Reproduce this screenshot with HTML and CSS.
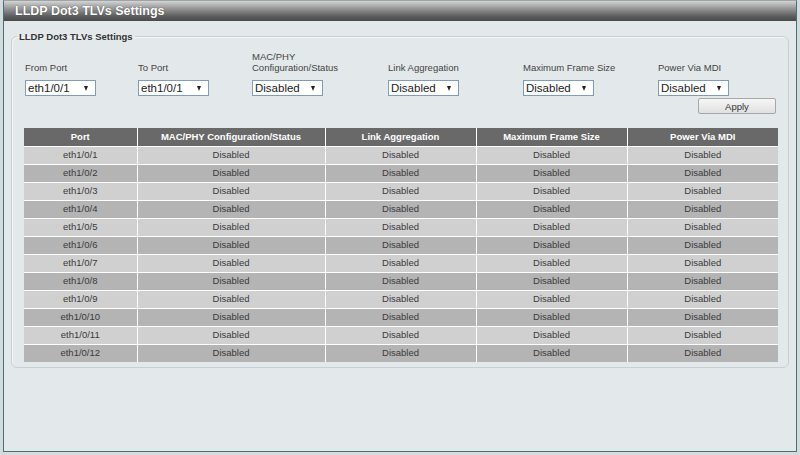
FILE: index.html
```html
<!DOCTYPE html>
<html>
<head>
<meta charset="utf-8">
<link rel="stylesheet" href="styles.css">
</head>
<body>
<div class="frame">
  <div class="titlebar">LLDP Dot3 TLVs Settings</div>
  <fieldset class="group">
    <legend>LLDP Dot3 TLVs Settings</legend>
    <div class="form">
      <div class="lbl">From Port</div>
      <div class="lbl">To Port</div>
      <div class="lbl">MAC/PHY<br>Configuration/Status</div>
      <div class="lbl">Link Aggregation</div>
      <div class="lbl">Maximum Frame Size</div>
      <div class="lbl">Power Via MDI</div>
      <div class="sel"><span>eth1/0/1</span><i class="arr"></i></div>
      <div class="sel"><span>eth1/0/1</span><i class="arr"></i></div>
      <div class="sel"><span>Disabled</span><i class="arr"></i></div>
      <div class="sel"><span>Disabled</span><i class="arr"></i></div>
      <div class="sel"><span>Disabled</span><i class="arr"></i></div>
      <div class="sel"><span>Disabled</span><i class="arr"></i></div>
    </div>
    <div class="actions"><button class="btn">Apply</button></div>
    <table class="grid">
      <colgroup>
        <col class="c1"><col class="c2"><col class="c3"><col class="c4"><col class="c5">
      </colgroup>
      <thead>
        <tr><th>Port</th><th>MAC/PHY Configuration/Status</th><th>Link Aggregation</th><th>Maximum Frame Size</th><th>Power Via MDI</th></tr>
      </thead>
      <tbody>
        <tr><td>eth1/0/1</td><td>Disabled</td><td>Disabled</td><td>Disabled</td><td>Disabled</td></tr>
        <tr><td>eth1/0/2</td><td>Disabled</td><td>Disabled</td><td>Disabled</td><td>Disabled</td></tr>
        <tr><td>eth1/0/3</td><td>Disabled</td><td>Disabled</td><td>Disabled</td><td>Disabled</td></tr>
        <tr><td>eth1/0/4</td><td>Disabled</td><td>Disabled</td><td>Disabled</td><td>Disabled</td></tr>
        <tr><td>eth1/0/5</td><td>Disabled</td><td>Disabled</td><td>Disabled</td><td>Disabled</td></tr>
        <tr><td>eth1/0/6</td><td>Disabled</td><td>Disabled</td><td>Disabled</td><td>Disabled</td></tr>
        <tr><td>eth1/0/7</td><td>Disabled</td><td>Disabled</td><td>Disabled</td><td>Disabled</td></tr>
        <tr><td>eth1/0/8</td><td>Disabled</td><td>Disabled</td><td>Disabled</td><td>Disabled</td></tr>
        <tr><td>eth1/0/9</td><td>Disabled</td><td>Disabled</td><td>Disabled</td><td>Disabled</td></tr>
        <tr><td>eth1/0/10</td><td>Disabled</td><td>Disabled</td><td>Disabled</td><td>Disabled</td></tr>
        <tr><td>eth1/0/11</td><td>Disabled</td><td>Disabled</td><td>Disabled</td><td>Disabled</td></tr>
        <tr><td>eth1/0/12</td><td>Disabled</td><td>Disabled</td><td>Disabled</td><td>Disabled</td></tr>
      </tbody>
    </table>
  </fieldset>
</div>
</body>
</html>
```
FILE: styles.css
```css
* { box-sizing: border-box; }
html, body { margin: 0; padding: 0; }
body {
  background: #d6dadc;
  font-family: "Liberation Sans", Arial, sans-serif;
  font-size: 9.5px;
  color: #333;
  width: 800px;
  height: 455px;
  overflow: hidden;
}
.frame {
  margin-left: 3px;
  width: 794px;
  height: 452px;
  background: #e3e8ea;
  border: 1px solid #3f7478;
  border-top: 1px solid #9aa5a8;
}
.titlebar {
  height: 20px;
  background: linear-gradient(#d4d4d4 0%, #9a9a9a 35%, #5e5e5e 75%, #4a4a4a 100%);
  color: #fff;
  font-weight: bold;
  font-size: 12.5px;
  line-height: 20px;
  padding-left: 11px;
  text-shadow: 0 0 1px #333;
}
.group {
  margin: 10px 7px 0 7px;
  padding: 0 10px 5px 12px;
  border: 1px solid #c7cfd2;
  border-radius: 6px;
  box-shadow: 1px 1px 0 #f4f6f7 inset;
}
.group legend {
  font-weight: bold;
  font-size: 9.5px;
  padding: 0 2px;
  margin-left: -7px;
  color: #333;
}
.form {
  display: grid;
  grid-template-columns: 113px 114px 136px 135px 135px 1fr;
  align-items: end;
  padding-left: 1px;
  margin-top: 9px;
  row-gap: 7px;
}
.lbl {
  font-size: 9.5px;
  line-height: 11px;
  color: #444;
}
.sel {
  width: 71px;
  height: 16px;
  border: 1px solid #7f9db9;
  background: #fff;
  display: flex;
  align-items: center;
  justify-content: space-between;
  padding: 0 7px 0 2px;
  font-size: 11.5px;
  color: #222;
}
.arr {
  width: 0;
  height: 0;
  border-left: 2.5px solid transparent;
  border-right: 2.5px solid transparent;
  border-top: 5px solid #222;
}
.actions {
  display: flex;
  justify-content: flex-end;
  padding-right: 2px;
  margin-top: 2px;
}
.btn {
  width: 78px;
  height: 16px;
  border: 1px solid #a7a7a7;
  background: linear-gradient(#f6f6f6, #e0e0e0);
  font-family: "Liberation Sans", Arial, sans-serif;
  font-size: 9.5px;
  color: #333;
  padding: 0;
  border-radius: 2px;
}
.grid {
  margin-top: 14px;
  width: 754px;
  border-collapse: collapse;
  table-layout: fixed;
}
.c1 { width: 113px; }
.c2 { width: 188px; }
.c3 { width: 151px; }
.c4 { width: 151px; }
.c5 { width: 151px; }
.grid th, .grid td {
  height: 18px;
  padding: 0;
  text-align: center;
  border: 1px solid #fff;
  border-top: 0;
  line-height: 16px;
}
.grid th {
  background: #696969;
  color: #fff;
  font-weight: bold;
  font-size: 9.5px;
}
.grid td {
  font-size: 9.5px;
  color: #3a3a3a;
}
.grid th:first-child, .grid td:first-child { border-left: 0; }
.grid th:last-child, .grid td:last-child { border-right: 0; }
.grid tbody tr:nth-child(odd) td { background: #d0d0d0; }
.grid tbody tr:nth-child(even) td { background: #b4b4b4; }
.grid tbody tr:last-child td { border-bottom: 0; }
```
